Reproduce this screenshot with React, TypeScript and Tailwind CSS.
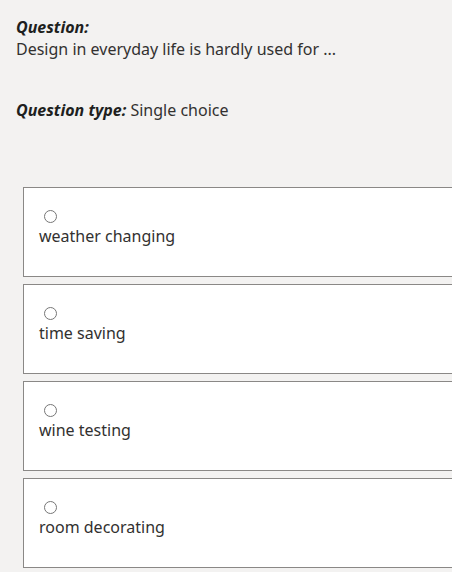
const options = ["weather changing", "time saving", "wine testing", "room decorating"]

export default function App() {
  return (
    <div
      className="h-[572px] w-[452px] overflow-hidden bg-[#f3f2f1] text-[16px] text-[#323130]"
      style={{ fontFamily: '"Noto Sans", "Open Sans", sans-serif' }}
    >
      <div className="px-4 pt-[16px]">
        <p className="font-bold italic leading-[22px] text-[#201f1e]">Question:</p>
        <p className="leading-[22px]">Design in everyday life is hardly used for ...</p>
        <p className="mt-[39px] leading-[22px]">
          <span className="font-bold italic text-[#201f1e]">Question type:</span> Single choice
        </p>
      </div>

      <div className="mt-[66px] ml-[23px] flex w-[460px] flex-col gap-[7px]">
        {options.map((option) => (
          <label
            key={option}
            className="flex h-[90px] flex-col items-start border border-[#8a8886] bg-white px-[15px] pt-[19px]"
          >
            <input type="radio" name="answer" className="m-0 mt-[3px] ml-[5px] h-[13px] w-[13px]" />
            <span className="mt-[2px] leading-[22px]">{option}</span>
          </label>
        ))}
      </div>
    </div>
  )
}
